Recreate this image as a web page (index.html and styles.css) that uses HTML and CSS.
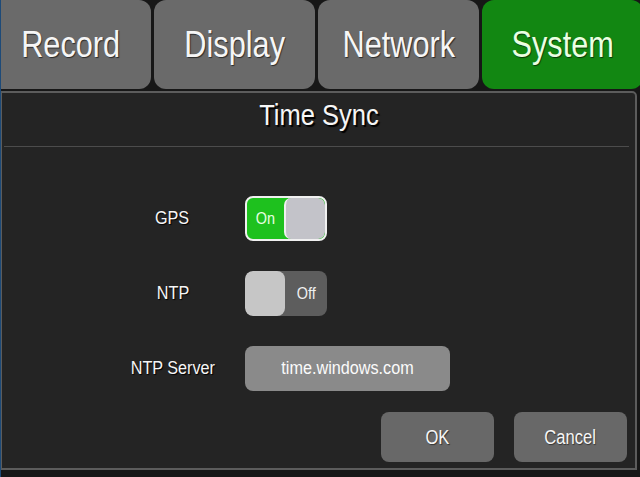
FILE: index.html
```html
<!DOCTYPE html>
<html>
<head>
<meta charset="utf-8">
<link rel="stylesheet" href="styles.css">
</head>
<body>
<div class="screen">
  <nav class="tabs">
    <div class="tab tab-first"><span class="tab-text">Record</span></div>
    <div class="tab"><span class="tab-text">Display</span></div>
    <div class="tab"><span class="tab-text">Network</span></div>
    <div class="tab tab-active"><span class="tab-text">System</span></div>
  </nav>
  <section class="panel">
    <h1 class="title"><span class="title-text">Time Sync</span></h1>
    <div class="divider"></div>
    <div class="form">
      <div class="row">
        <div class="label"><span class="label-text">GPS</span></div>
        <div class="toggle toggle-on">
          <span class="toggle-text"><span class="small-text">On</span></span>
          <span class="knob"></span>
        </div>
      </div>
      <div class="row">
        <div class="label"><span class="label-text">NTP</span></div>
        <div class="toggle toggle-off">
          <span class="knob"></span>
          <span class="toggle-text"><span class="small-text">Off</span></span>
        </div>
      </div>
      <div class="row">
        <div class="label"><span class="label-text">NTP Server</span></div>
        <div class="field"><span class="field-text">time.windows.com</span></div>
      </div>
    </div>
    <div class="actions">
      <button class="btn"><span class="btn-text">OK</span></button>
      <button class="btn"><span class="btn-text">Cancel</span></button>
    </div>
  </section>
</div>
</body>
</html>
```
FILE: styles.css
```css
html, body {
  margin: 0;
  padding: 0;
  background: #171717;
  overflow: hidden;
}
.screen {
  width: 640px;
  height: 477px;
  overflow: hidden;
  font-family: "Liberation Sans", Arial, sans-serif;
  color: #f6f6f6;
  background: #171717;
  border-left: 1px solid #1d4a78;
  box-sizing: border-box;
}
.tabs {
  display: flex;
  gap: 3px;
  height: 89px;
  margin-left: -11px;
}
.tab {
  flex: 0 0 161px;
  height: 89px;
  background: #6a6a6a;
  border-radius: 12px;
  display: flex;
  align-items: center;
  justify-content: center;
}
.tab-first {
  flex-basis: 161px;
}
.tab-active {
  background: #128712;
  color: #eaffe2;
}
.tab-text {
  display: inline-block;
  font-size: 37px;
  transform: scaleX(0.83);
  text-shadow: 1px 1px 1px rgba(0,0,0,0.6);
  white-space: nowrap;
}
.panel {
  margin-top: 2px;
  width: 637px;
  height: 379px;
  box-sizing: border-box;
  margin-left: -1px;
  border: 2px solid #5c5c5c;
  border-radius: 0 5px 0 0;
  background: #242424;
  display: flex;
  flex-direction: column;
}
.title {
  margin: 0;
  height: 45px;
  display: flex;
  align-items: center;
  justify-content: center;
  font-weight: normal;
}
.title-text {
  display: inline-block;
  font-size: 29px;
  transform: scaleX(0.88);
  text-shadow: 2px 2px 1px #000;
  white-space: nowrap;
}
.divider {
  height: 1px;
  background: #4c4c4c;
  margin: 8px 6px 0 2px;
}
.form {
  margin-top: 49px;
  display: flex;
  flex-direction: column;
  gap: 30px;
  padding-left: 98px;
}
.row {
  display: flex;
  align-items: center;
  height: 45px;
}
.label {
  width: 145px;
  text-align: center;
}
.label-text {
  display: inline-block;
  font-size: 18px;
  transform: scaleX(0.9);
  text-shadow: 1px 1px 1px #000;
  white-space: nowrap;
}
.toggle {
  width: 82px;
  height: 45px;
  box-sizing: border-box;
  border-radius: 8px;
  display: flex;
  overflow: hidden;
}
.toggle-on {
  border: 2px solid #f0f0f0;
  background: #1ec11e;
}
.toggle-off {
  background: #5d5d5d;
}
.toggle-text {
  flex: 1;
  display: flex;
  align-items: center;
  justify-content: center;
}
.small-text {
  display: inline-block;
  font-size: 17px;
  transform: scaleX(0.85);
  color: #f0f0f0;
}
.toggle-on .small-text {
  color: #e6ffe0;
}
.knob {
  width: 40px;
  height: 100%;
  background: #c3c3c9;
  border-radius: 7px;
}
.toggle-on .knob {
  border-left: 2px solid #f0f0f0;
  width: 39px;
}
.toggle-off .knob {
  background: #c6c6c6;
  border-radius: 8px;
}
.field {
  width: 205px;
  height: 45px;
  background: #8a8a8a;
  border-radius: 8px;
  display: flex;
  align-items: center;
  justify-content: center;
}
.field-text {
  display: inline-block;
  font-size: 18px;
  transform: scaleX(0.9);
  color: #fbfbfb;
  white-space: nowrap;
}
.actions {
  margin-top: 21px;
  display: flex;
  justify-content: flex-end;
  gap: 20px;
  padding-right: 8px;
}
.btn {
  width: 113px;
  height: 50px;
  border: none;
  background: #686868;
  border-radius: 8px;
  color: #f6f6f6;
  font-family: inherit;
  padding: 0;
  display: flex;
  align-items: center;
  justify-content: center;
}
.btn-text {
  display: inline-block;
  font-size: 20px;
  transform: scaleX(0.83);
  text-shadow: 1px 1px 1px rgba(0,0,0,0.5);
}
```
